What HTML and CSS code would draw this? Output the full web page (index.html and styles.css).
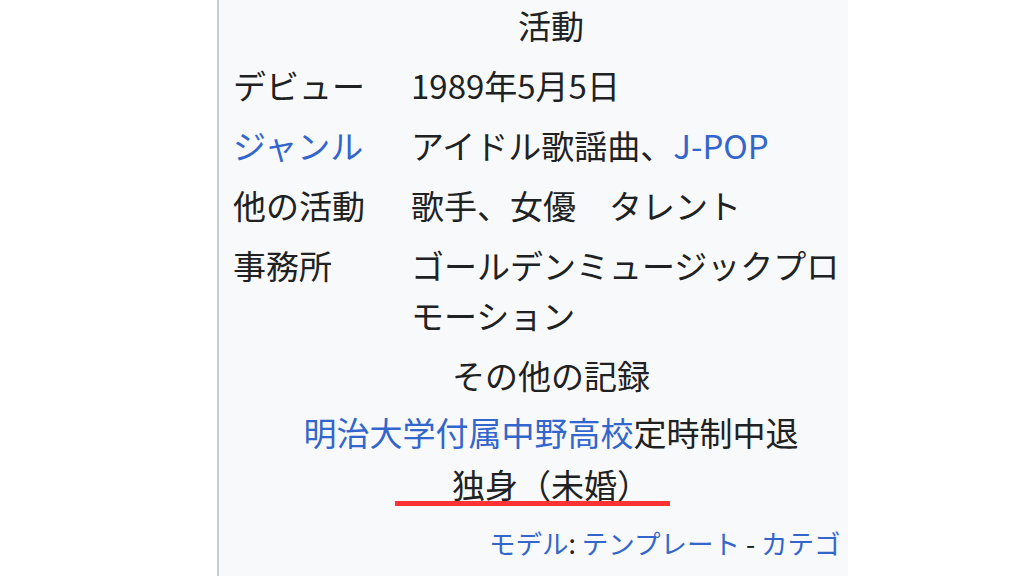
FILE: index.html
```html
<!DOCTYPE html>
<html lang="ja">
<head>
<meta charset="utf-8">
<title>活動</title>
<link rel="stylesheet" href="styles.css">
</head>
<body>
<div class="panel">
  <div class="box">
    <div class="head">活動</div>
    <div class="row"><div class="label">デビュー</div><div class="value">1989年5月5日</div></div>
    <div class="row"><div class="label"><a class="link">ジャンル</a></div><div class="value">アイドル歌謡曲、<a class="link">J-POP</a></div></div>
    <div class="row"><div class="label">他の活動</div><div class="value">歌手、女優　タレント</div></div>
    <div class="row"><div class="label">事務所</div><div class="value">ゴールデンミュージックプロモーション</div></div>
    <div class="head head-sub">その他の記録</div>
    <div class="records"><a class="link">明治大学付属中野高校</a>定時制中退<br>独身（未婚）</div>
    <div class="foot"><a class="link">モデル</a>: <a class="link">テンプレート</a> - <a class="link">カテゴリ</a></div>
  </div>
  <div class="mark"></div>
</div>
</body>
</html>
```

FILE: styles.css
```css
html, body {
  margin: 0;
  padding: 0;
  background: #ffffff;
}
body {
  font-family: "Noto Sans CJK JP", "Noto Sans", sans-serif;
  color: #202122;
  font-size: 33px;
  line-height: 50px;
}
.panel {
  margin-left: 217px;
  width: 629px;
  height: 576px;
  border-left: 2px solid #c8ccd1;
  background: #f8f9fa;
  overflow: hidden;
  position: relative;
}
.box {
  width: 664px;
}
.head {
  text-align: center;
  padding: 0 0 5px;
}
.head-sub {
  padding: 5px 0 3px;
}
.row {
  display: flex;
  padding: 5px 0 5px 14px;
}
.label {
  flex: none;
  width: 178px;
}
.value {
  width: 440px;
}
.link {
  color: #3366cc;
  text-decoration: none;
}
.records {
  text-align: center;
  line-height: 52px;
  padding: 3px 0 5px;
}
.foot {
  white-space: nowrap;
  font-size: 26.5px;
  line-height: 40px;
  width: 355px;
  overflow: hidden;
  padding: 8px 0 0 270px;
}
.mark {
  position: absolute;
  left: 176px;
  top: 501px;
  width: 275px;
  height: 5px;
  background: #ff3333;
}
```
